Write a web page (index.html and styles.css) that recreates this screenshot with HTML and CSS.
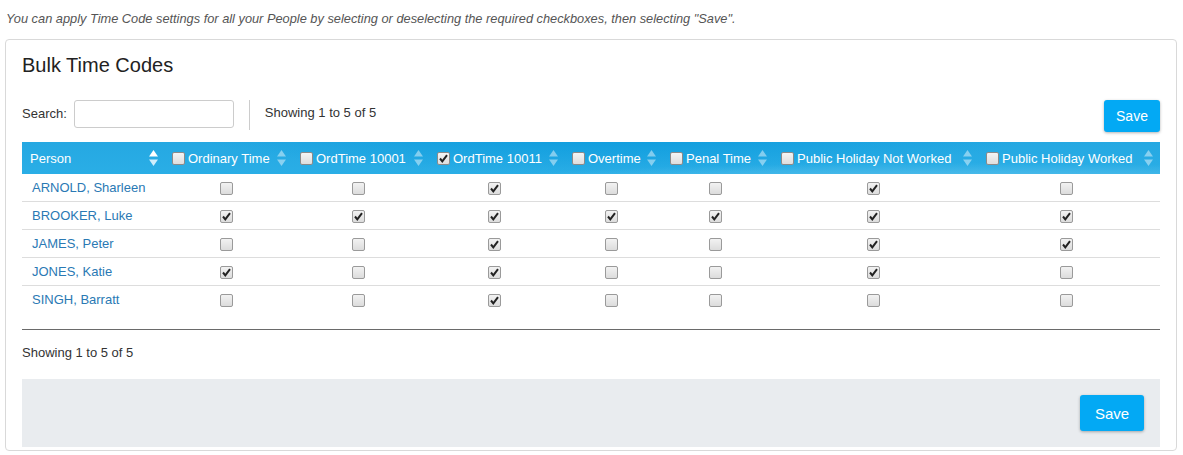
FILE: index.html
```html
<!DOCTYPE html>
<html>
<head>
<meta charset="utf-8">
<link rel="stylesheet" href="styles.css">
</head>
<body>
<p class="intro">You can apply Time Code settings for all your People by selecting or deselecting the required checkboxes, then selecting "Save".</p>
<div class="panel">
  <h2 class="title">Bulk Time Codes</h2>
  <div class="toolbar">
    <label class="search-label">Search:</label>
    <input class="search-input" type="text">
    <span class="divider"></span>
    <span class="info">Showing 1 to 5 of 5</span>
    <button class="btn btn-top">Save</button>
  </div>
  <div class="grid-wrap">
    <table class="grid">
      <colgroup>
        <col style="width:143px"><col style="width:128px"><col style="width:137px"><col style="width:135px"><col style="width:98px"><col style="width:111px"><col style="width:205px"><col style="width:181px">
      </colgroup>
      <thead>
        <tr>
          <th><div class="th"><span class="lbl person">Person</span><svg class="sort active" width="9" height="16" viewBox="0 0 9 16"><path d="M4.5 0L9 6.5H0Z" fill="#fff"/><path d="M4.5 16L9 9.5H0Z" fill="#cfeefc"/></svg></div></th>
          <th><div class="th"><span class="cb"></span><span class="lbl">Ordinary Time</span><svg class="sort" width="9" height="16" viewBox="0 0 9 16"><path d="M4.5 0L9 6.5H0Z"/><path d="M4.5 16L9 9.5H0Z"/></svg></div></th>
          <th><div class="th"><span class="cb"></span><span class="lbl">OrdTime 10001</span><svg class="sort" width="9" height="16" viewBox="0 0 9 16"><path d="M4.5 0L9 6.5H0Z"/><path d="M4.5 16L9 9.5H0Z"/></svg></div></th>
          <th><div class="th"><span class="cb on"><svg viewBox="0 0 13 13"><path d="M3 6.5L5.3 9.3L10 3.2" fill="none" stroke="#222" stroke-width="2"/></svg></span><span class="lbl">OrdTime 10011</span><svg class="sort" width="9" height="16" viewBox="0 0 9 16"><path d="M4.5 0L9 6.5H0Z"/><path d="M4.5 16L9 9.5H0Z"/></svg></div></th>
          <th><div class="th"><span class="cb"></span><span class="lbl">Overtime</span><svg class="sort" width="9" height="16" viewBox="0 0 9 16"><path d="M4.5 0L9 6.5H0Z"/><path d="M4.5 16L9 9.5H0Z"/></svg></div></th>
          <th><div class="th"><span class="cb"></span><span class="lbl">Penal Time</span><svg class="sort" width="9" height="16" viewBox="0 0 9 16"><path d="M4.5 0L9 6.5H0Z"/><path d="M4.5 16L9 9.5H0Z"/></svg></div></th>
          <th><div class="th"><span class="cb"></span><span class="lbl">Public Holiday Not Worked</span><svg class="sort" width="9" height="16" viewBox="0 0 9 16"><path d="M4.5 0L9 6.5H0Z"/><path d="M4.5 16L9 9.5H0Z"/></svg></div></th>
          <th><div class="th"><span class="cb"></span><span class="lbl">Public Holiday Worked</span><svg class="sort" width="9" height="16" viewBox="0 0 9 16"><path d="M4.5 0L9 6.5H0Z"/><path d="M4.5 16L9 9.5H0Z"/></svg></div></th>
        </tr>
      </thead>
      <tbody id="rows"></tbody>
    </table>
  </div>
  <div class="info-bottom">Showing 1 to 5 of 5</div>
  <div class="footer">
    <button class="btn btn-bottom">Save</button>
  </div>
</div>
<script src="app.js"></script>
</body>
</html>
```

FILE: app.js
```js
const data = [
  ["ARNOLD, Sharleen", [0,0,1,0,0,1,0]],
  ["BROOKER, Luke", [1,1,1,1,1,1,1]],
  ["JAMES, Peter", [0,0,1,0,0,1,1]],
  ["JONES, Katie", [1,0,1,0,0,1,0]],
  ["SINGH, Barratt", [0,0,1,0,0,0,0]]
];
const check = '<svg viewBox="0 0 13 13"><path d="M3 6.5L5.3 9.3L10 3.2" fill="none" stroke="#222" stroke-width="2"/></svg>';
const tb = document.getElementById('rows');
tb.innerHTML = data.map(([name, v]) =>
  '<tr><td class="name"><a href="#">' + name + '</a></td>' +
  v.map(x => '<td class="c"><span class="cb' + (x ? ' on">' + check : '">') + '</span></td>').join('') +
  '</tr>').join('');
```

FILE: styles.css
```css
html, body {
  margin: 0;
  padding: 0;
  background: #fff;
}
body {
  padding: 0 6px 0 5px;
  font-family: "Liberation Sans", Arial, sans-serif;
  font-size: 13px;
  color: #333;
}
.intro {
  margin: 10px 0 11px 1px;
  font-size: 12.8px;
  line-height: 18px;
  font-style: italic;
  color: #555;
}
.panel {
  border: 1px solid #d9d9d9;
  border-radius: 4px;
  padding: 13px 16px 3px 16px;
}
.title {
  margin: 0;
  font-size: 20px;
  font-weight: normal;
  line-height: 24px;
  color: #222;
}
.toolbar {
  display: flex;
  align-items: flex-start;
  margin-top: 23px;
  height: 32px;
}
.search-label {
  line-height: 28px;
  margin-right: 7px;
  color: #333;
}
.search-input {
  box-sizing: border-box;
  width: 160px;
  height: 28px;
  border: 1px solid #ccc;
  border-radius: 3px;
  margin: 0;
  padding: 0 6px;
}
.divider {
  width: 1px;
  height: 30px;
  background: #ccc;
  margin: 0 15px 0 15px;
}
.info {
  line-height: 26px;
}
.btn {
  border: 0;
  border-radius: 3px;
  background: #03a9f4;
  color: #fff;
  font-family: "Liberation Sans", Arial, sans-serif;
  box-shadow: 0 1px 3px rgba(0,0,0,0.3);
  padding: 0;
  cursor: pointer;
}
.btn-top {
  margin-left: auto;
  width: 56px;
  height: 32px;
  font-size: 14px;
}
.btn-bottom {
  width: 64px;
  height: 36px;
  font-size: 15px;
}
.grid-wrap {
  margin-top: 10px;
  padding-bottom: 16px;
  border-bottom: 1px solid #6a6a6a;
  background:
    radial-gradient(ellipse 38% 140% at 52% -40%, rgba(0,150,220,0.75), rgba(0,150,220,0) 100%) top / 100% 32px no-repeat,
    radial-gradient(ellipse 45% 70% at 82% 135%, rgba(255,255,255,0.28), rgba(255,255,255,0) 100%) top / 100% 32px no-repeat,
    linear-gradient(#25a8e2, #2aaee6) top / 100% 32px no-repeat;
}
.grid {
  width: 1138px;
  table-layout: fixed;
  border-collapse: collapse;
  border-spacing: 0;
}
.grid th {
  height: 32px;
  padding: 0;
  font-weight: normal;
  color: #fff;
  text-align: left;
}
.th {
  display: flex;
  align-items: center;
  padding: 0 7px 0 7px;
  white-space: nowrap;
}
.th .cb {
  margin-right: 3px;
  margin-top: 1px;
}
.lbl.person {
  margin-left: 1px;
}
.sort {
  margin-left: auto;
  fill: rgba(255,255,255,0.45);
  flex: none;
}
.grid td {
  height: 27px;
  padding: 0;
  border-bottom: 1px solid #ddd;
}
.grid tbody tr:last-child td {
  border-bottom: 0;
}
.grid td.name {
  padding-left: 10px;
}
.grid td.name a {
  color: #2a79b4;
  text-decoration: none;
}
.grid td.c {
  text-align: center;
  padding: 0 14px 0 8px;
}
.cb {
  display: inline-block;
  box-sizing: border-box;
  width: 13px;
  height: 13px;
  border: 1px solid #9a9a9a;
  border-radius: 2px;
  background: linear-gradient(#f2f2f2, #dcdcdc);
  vertical-align: middle;
  position: relative;
  flex: none;
}
.cb svg {
  position: absolute;
  left: -1px;
  top: -1px;
  width: 13px;
  height: 13px;
}
.th .cb {
  border-color: #8a8a8a;
  background: linear-gradient(#f4f4f4, #dedede);
}
.info-bottom {
  margin-top: 14px;
  line-height: 18px;
  color: #333;
}
.footer {
  margin-top: 17px;
  background: #e9ecef;
  padding: 16px;
  display: flex;
  justify-content: flex-end;
}
```
